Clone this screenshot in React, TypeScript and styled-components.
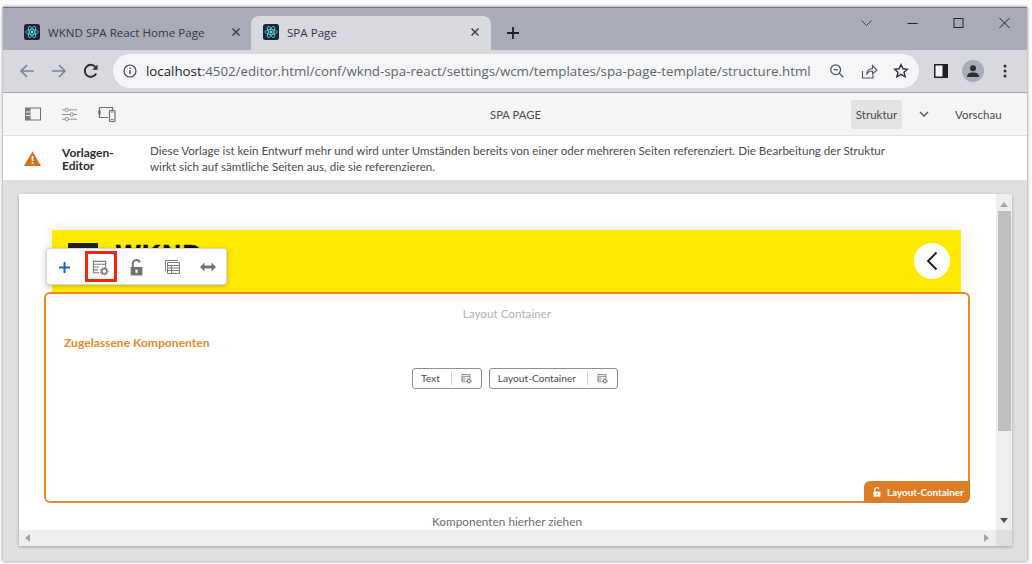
import React from 'react';
import styled, { createGlobalStyle } from 'styled-components';

const GlobalStyle = createGlobalStyle`
  html, body {
    margin: 0;
    padding: 0;
    background: #ffffff;
    overflow: hidden;
  }
  * { box-sizing: border-box; }
`;

const Page = styled.div`
  width: 1032px;
  height: 564px;
  padding: 7px 5px 3px 3px;
  background: #fbfbfb;
`;

const Window = styled.div`
  width: 1024px;
  height: 554px;
  display: flex;
  flex-direction: column;
  border-top: 1px solid #6f7177;
  box-shadow: 0 0 3px rgba(0, 0, 0, 0.55);
  background: #e0e0e0;
  font-family: 'Lato', sans-serif;
`;

const TabStrip = styled.div`
  height: 42px;
  flex: none;
  display: flex;
  align-items: flex-end;
  padding-left: 8px;
  background: #a8abb8;
  position: relative;
  font-family: 'Open Sans', sans-serif;
`;

const Tab = styled.div<{ $active?: boolean }>`
  width: 240px;
  height: 34px;
  display: flex;
  align-items: center;
  padding: 0 ${(p) => (p.$active ? '11px' : '10px')} 2px ${(p) => (p.$active ? '12px' : '13px')};
  border-radius: 8px 8px 0 0;
  background: ${(p) => (p.$active ? '#d7d9df' : 'transparent')};
  font-size: 11.6px;
  color: #333640;
`;

const TabTitle = styled.span`
  flex: 1;
  margin-left: 8px;
  white-space: nowrap;
`;

const NewTab = styled.div`
  margin: 0 0 7px 12px;
  width: 20px;
  height: 20px;
  display: flex;
  align-items: center;
  justify-content: center;
`;

const WindowControls = styled.div`
  position: absolute;
  top: 9px;
  right: 17px;
  display: flex;
  gap: 35px;
  align-items: center;
`;

const AddressRow = styled.div`
  height: 43px;
  flex: none;
  display: flex;
  align-items: center;
  padding: 0 0 0 16px;
  background: #d7d9df;
  border-bottom: 1px solid #a5a6a9;
  font-family: 'Open Sans', sans-serif;
`;

const NavIcons = styled.div`
  display: flex;
  gap: 16px;
  align-items: center;
  width: 94px;
`;

const Omnibox = styled.div`
  width: 806px;
  height: 34px;
  flex: none;
  margin-right: 15px;
  border-radius: 17px;
  background: #f5f6f8;
  display: flex;
  align-items: center;
  padding: 0 10px 0 10px;
  font-size: 13.3px;
  color: #5f6368;
`;

const Url = styled.span`
  flex: 1;
  min-width: 0;
  margin-left: 9px;
  white-space: nowrap;
  b {
    font-weight: 400;
    color: #202124;
  }
`;

const OmniIcons = styled.div`
  display: flex;
  flex: none;
  gap: 15px;
  align-items: center;
`;

const ChromeRight = styled.div`
  display: flex;
  align-items: center;
  gap: 14px;
`;

const Avatar = styled.div`
  width: 22px;
  height: 22px;
  border-radius: 50%;
  background: #a8abb8;
  display: flex;
  align-items: center;
  justify-content: center;
`;

const MenuDots = styled.svg`
  margin-left: 5px;
`;

const EditorBar = styled.div`
  height: 43px;
  flex: none;
  display: flex;
  align-items: center;
  padding: 0 24px 0 22px;
  background: #f5f5f5;
  border-bottom: 1px solid #e1e1e1;
  color: #4b4b4b;
  font-size: 11.5px;
`;

const BarIcons = styled.div`
  display: flex;
  align-items: center;
  gap: 21px;
  width: 465px;
`;

const PageTitle = styled.div`
  width: 361px;
  font-size: 11.3px;
`;

const ModeButton = styled.div`
  width: 51px;
  height: 29px;
  border-radius: 3px;
  background: #e3e3e3;
  display: flex;
  align-items: center;
  justify-content: center;
`;

const ModeCaret = styled.div`
  width: 44px;
  margin-right: 9px;
  display: flex;
  justify-content: center;
`;

const Preview = styled.div``;

const AlertBar = styled.div`
  height: 44px;
  flex: none;
  display: flex;
  align-items: center;
  padding: 1px 0 0 21px;
  background: #ffffff;
  font-size: 11.6px;
  line-height: 16px;
`;

const AlertTitle = styled.div`
  width: 88px;
  margin-left: 21px;
  font-weight: 700;
  color: #2c2c2c;
  font-size: 12px;
  line-height: 13px;
`;

const AlertText = styled.div`
  width: 745px;
  color: #4b4b4b;
`;

const Stage = styled.div`
  flex: 1;
  padding: 14px 15px 15px 16px;
  background: #e0e0e0;
`;

const Frame = styled.div`
  width: 993px;
  height: 352px;
  display: grid;
  grid-template-columns: minmax(0, 1fr) 16px;
  grid-template-rows: minmax(0, 1fr) 16px;
  background: #ffffff;
  box-shadow: 0 1px 3px rgba(0, 0, 0, 0.3);
`;

const Canvas = styled.div`
  position: relative;
  overflow: hidden;
  padding: 36px 0 0 25px;
`;

const Header = styled.div`
  width: 909px;
  height: 62px;
  margin-left: 8px;
  background: #ffea00;
  box-shadow: 0 0 14px rgba(0, 0, 0, 0.1);
  display: flex;
  align-items: center;
  justify-content: space-between;
  padding: 0 11px 0 16px;
  overflow: hidden;
`;

const Logo = styled.div`
  display: flex;
  gap: 18px;
  align-items: flex-start;
  height: 62px;
  padding-top: 13px;
`;

const LogoBars = styled.div`
  width: 30px;
  height: 5px;
  background: #202020;
`;

const LogoText = styled.div`
  font-family: 'Liberation Sans', sans-serif;
  font-size: 26px;
  font-weight: 700;
  line-height: 22px;
  letter-spacing: 1.5px;
  -webkit-text-stroke: 0.6px #111111;
  color: #111111;
`;

const BackButton = styled.div`
  width: 36px;
  height: 36px;
  border-radius: 50%;
  background: #ffffff;
  display: flex;
  align-items: center;
  justify-content: center;
`;

const Container = styled.div`
  width: 926px;
  height: 211px;
  border: 2px solid #e8892a;
  border-radius: 6px;
  position: relative;
  padding: 11px 18px 0;
`;

const Placeholder = styled.div`
  text-align: center;
  font-size: 11.7px;
  line-height: 16px;
  color: #b3b3b3;
`;

const AllowedTitle = styled.div`
  margin-top: 14px;
  font-size: 12.1px;
  line-height: 16px;
  font-weight: 700;
  color: #e8892a;
`;

const ChipRow = styled.div`
  margin-top: 17px;
  display: flex;
  justify-content: center;
  gap: 7px;
  padding-left: 16px;
`;

const Chip = styled.div`
  height: 21px;
  display: flex;
  align-items: center;
  border: 1px solid #8e8e8e;
  border-radius: 3px;
  font-size: 10.2px;
  color: #4b4b4b;
  background: #ffffff;
`;

const ChipLabel = styled.span`
  padding: 0 11px 0 8px;
  height: 13px;
  line-height: 13px;
  border-right: 1px solid #d0d0d0;
`;

const ChipIcon = styled.span`
  width: 29px;
  display: flex;
  justify-content: center;
`;

const Badge = styled.div`
  position: absolute;
  right: -2px;
  bottom: -2px;
  width: 106px;
  height: 22px;
  border-radius: 6px 0 6px 0;
  background: #dc7d26;
  color: #ffffff;
  font-size: 9.85px;
  font-weight: 700;
  display: flex;
  align-items: center;
  padding-left: 8px;
  gap: 5px;
  white-space: nowrap;
`;

const DropHint = styled.div`
  width: 926px;
  margin-top: 11px;
  text-align: center;
  font-size: 11.8px;
  line-height: 16px;
  color: #6e6e6e;
`;

const FloatingToolbar = styled.div`
  position: absolute;
  left: 27px;
  top: 54px;
  width: 181px;
  height: 37px;
  padding-top: 2px;
  background: #ffffff;
  border: 1px solid #d8d8d8;
  border-radius: 3px;
  box-shadow: 0 1px 4px rgba(0, 0, 0, 0.25);
  display: flex;
  align-items: flex-start;
`;

const ToolButton = styled.div<{ $selected?: boolean }>`
  width: 36px;
  height: 32px;
  display: flex;
  align-items: center;
  justify-content: center;
  position: relative;
  &::after {
    content: '';
    display: ${(p) => (p.$selected ? 'block' : 'none')};
    position: absolute;
    box-sizing: border-box;
    left: 2px;
    top: 0;
    width: 32px;
    height: 31px;
    border: 3px solid #f5250d;
  }
`;

const VTrack = styled.div`
  background: #efefef;
  display: flex;
  flex-direction: column;
  align-items: center;
  padding-top: 8px;
  position: relative;
`;

const VThumb = styled.div`
  width: 13px;
  height: 220px;
  margin-top: 4px;
  background: #bfbfbf;
`;

const VDown = styled.div`
  position: absolute;
  bottom: 7px;
  left: 4px;
  width: 0;
  height: 0;
  border-left: 4px solid transparent;
  border-right: 4px solid transparent;
  border-top: 5px solid #505050;
`;

const Up = styled.div`
  width: 0;
  height: 0;
  border-left: 4px solid transparent;
  border-right: 4px solid transparent;
  border-bottom: 5px solid #a3a3a3;
`;

const HTrack = styled.div`
  background: #efefef;
  display: flex;
  align-items: center;
  justify-content: space-between;
  padding: 0 7px 0 6px;
`;

const Left = styled.div`
  width: 0;
  height: 0;
  border-top: 4px solid transparent;
  border-bottom: 4px solid transparent;
  border-right: 5px solid #a3a3a3;
`;

const Right = styled.div`
  width: 0;
  height: 0;
  border-top: 4px solid transparent;
  border-bottom: 4px solid transparent;
  border-left: 5px solid #a3a3a3;
`;

const Corner = styled.div`
  background: #dfdfdf;
`;

const ReactFavicon = () => (
  <svg width="16" height="16" viewBox="0 0 16 16">
    <rect width="16" height="16" rx="2.5" fill="#20232a" />
    <g fill="none" stroke="#61dafb" strokeWidth="0.8">
      <ellipse cx="8" cy="8" rx="6.2" ry="2.4" />
      <ellipse cx="8" cy="8" rx="6.2" ry="2.4" transform="rotate(60 8 8)" />
      <ellipse cx="8" cy="8" rx="6.2" ry="2.4" transform="rotate(120 8 8)" />
    </g>
    <circle cx="8" cy="8" r="1.3" fill="#61dafb" />
  </svg>
);

const CloseX = () => (
  <svg width="10" height="10" viewBox="0 0 10 10">
    <path d="M1.5 1.5l7 7M8.5 1.5l-7 7" stroke="#33363d" strokeWidth="1.4" />
  </svg>
);

// Template policy icon, used both in the toolbar and the component chips
const PolicyIcon = ({ size = 18, color = '#7a7a7a' }: { size?: number; color?: string }) => (
  <svg width={size} height={size} viewBox="0 0 18 18" fill="none">
    <path d="M1.5 14.5v-12h13v6.5M1.5 5.5h13M1.5 8.5h6M1.5 11.5h5M1.5 14.5h6" stroke={color} strokeWidth="1.2" />
    <circle cx="13" cy="13" r="2.6" stroke={color} strokeWidth="1.6" />
    <circle cx="13" cy="13" r="4" stroke={color} strokeWidth="1.2" strokeDasharray="1.4 1.2" />
  </svg>
);

const LockOpen = ({ size = 16, color = '#707070' }: { size?: number; color?: string }) => (
  <svg width={size} height={size} viewBox="0 0 16 16" fill="none">
    <path d="M4.5 8V4.5a3.4 3.4 0 0 1 6.6-1.2" stroke={color} strokeWidth="1.8" />
    <path d="M2.5 7.5h11v8h-11z" fill={color} />
    <rect x="7" y="10" width="2" height="3" fill={color === '#ffffff' ? '#dc7d26' : '#ffffff'} />
  </svg>
);

export default function App() {
  return (
    <Page>
      <GlobalStyle />
      <Window>
        <TabStrip>
          <Tab>
            <ReactFavicon />
            <TabTitle>WKND SPA React Home Page</TabTitle>
            <CloseX />
          </Tab>
          <Tab $active>
            <ReactFavicon />
            <TabTitle>SPA Page</TabTitle>
            <CloseX />
          </Tab>
          <NewTab>
            <svg width="12" height="12" viewBox="0 0 12 12">
              <path d="M6 0v12M0 6h12" stroke="#202124" strokeWidth="1.8" />
            </svg>
          </NewTab>
          <WindowControls>
            <svg width="11" height="12" viewBox="0 0 11 12" fill="none">
              <path d="M0.5 3.500l5 5 5-5" stroke="#333" strokeWidth="0.9" />
            </svg>
            <svg width="11" height="12" viewBox="0 0 11 12" fill="none">
              <path d="M0.5 6.5h10" stroke="#222" strokeWidth="1" />
            </svg>
            <svg width="11" height="12" viewBox="0 0 11 12" fill="none">
              <rect x="1" y="1.5" width="9" height="9" stroke="#222" strokeWidth="1" />
            </svg>
            <svg width="11" height="12" viewBox="0 0 11 12" fill="none">
              <path d="M0.5 1l10 10M10.500 1l-10 10" stroke="#222" strokeWidth="1" />
            </svg>
          </WindowControls>
        </TabStrip>
        <AddressRow>
          <NavIcons>
            <svg width="16" height="16" viewBox="0 0 16 16" fill="none">
              <path d="M15 8H2M8 2L2 8l6 6" stroke="#80848c" strokeWidth="1.7" />
            </svg>
            <svg width="16" height="16" viewBox="0 0 16 16" fill="none">
              <path d="M1 8h13M8 2l6 6-6 6" stroke="#80848c" strokeWidth="1.7" />
            </svg>
            <svg width="16" height="16" viewBox="0 0 16 16" fill="none">
              <path d="M13.2 10.5A6 6 0 1 1 12.4 3.9" stroke="#2b2d33" strokeWidth="1.9" />
              <path d="M14.5 1.5v5.2H9.3z" fill="#2b2d33" />
            </svg>
          </NavIcons>
          <Omnibox>
            <svg width="14" height="14" viewBox="0 0 14 14" fill="none">
              <circle cx="7" cy="7" r="6" stroke="#45484f" strokeWidth="1.2" />
              <path d="M7 6v4.2M7 3.6v1.4" stroke="#45484f" strokeWidth="1.3" />
            </svg>
            <Url>
              <b>localhost</b>:4502/editor.html/conf/wknd-spa-react/settings/wcm/templates/spa-page-template/structure.html
            </Url>
            <OmniIcons>
              <svg width="16" height="16" viewBox="0 0 18 18" fill="none">
                <circle cx="7.5" cy="7.5" r="5.500" stroke="#50535a" strokeWidth="1.4" />
                <path d="M11.3 11.3L16 16M5.2 7.5h4.6" stroke="#50535a" strokeWidth="1.4" />
              </svg>
              <svg width="18" height="18" viewBox="0 0 18 18" fill="none">
                <path d="M2.5 9v7h10.5v-3" stroke="#50535a" strokeWidth="1.1" />
                <path d="M6.5 12.5c.5-4 3-5.8 6-6V3.500l4.500 4.500-4.500 4v-3c-2.500 0-4.500 1-6 3.500z" stroke="#50535a" strokeWidth="1.1" />
              </svg>
              <svg width="16" height="16" viewBox="0 0 16 16" fill="none">
                <path d="M8 1.5l1.9 4.3 4.6.4-3.5 3 1.1 4.6L8 11.4l-4.1 2.4L5 9.200l-3.500-3 4.600-.4z" stroke="#2f3137" strokeWidth="1.4" />
              </svg>
            </OmniIcons>
          </Omnibox>
          <ChromeRight>
            <svg width="14" height="14" viewBox="0 0 14 14">
              <rect width="14" height="14" fill="#1f2023" />
              <rect x="1.500" y="1.500" width="7" height="11" fill="#f4f5f7" />
            </svg>
            <Avatar>
              <svg width="14" height="14" viewBox="0 0 14 14" fill="#2c2e33">
                <circle cx="7" cy="4.200" r="3" />
                <path d="M1 13c0-3 2.500-4.400 6-4.400s6 1.400 6 4.400z" />
              </svg>
            </Avatar>
            <MenuDots width="4" height="14" viewBox="0 0 4 14" fill="#2c2e33">
              <circle cx="2" cy="2" r="1.500" />
              <circle cx="2" cy="7" r="1.500" />
              <circle cx="2" cy="12" r="1.500" />
            </MenuDots>
          </ChromeRight>
        </AddressRow>
        <EditorBar>
          <BarIcons>
            <svg width="16" height="14" viewBox="0 0 16 14" fill="none">
              <rect x="0.500" y="1" width="15" height="12" stroke="#6e6e6e" />
              <rect x="0.500" y="1" width="5" height="12" fill="#7d7d7d" />
              <path d="M1 5h4M1 8.500h4" stroke="#f5f5f5" />
            </svg>
            <svg width="15" height="15" viewBox="0 0 16 15" fill="none" stroke="#8a8a8a">
              <path d="M0 2.500h3.500M7 2.500h9M0 7.500h9M12.500 7.500h3.500M0 12.500h3.500M7 12.500h9" />
              <circle cx="5" cy="2.500" r="1.800" />
              <circle cx="10.500" cy="7.500" r="1.800" />
              <circle cx="5" cy="12.500" r="1.800" />
            </svg>
            <svg width="18" height="16" viewBox="0 0 18 16" fill="none" stroke="#6e6e6e">
              <path d="M10 11.500H1.500v-10h13V4" strokeWidth="1.200" />
              <path d="M1.500 4.500v4" strokeWidth="2.400" />
              <rect x="11.500" y="4.500" width="5.500" height="11" rx="0.700" strokeWidth="1.200" />
              <path d="M13 13.700h2.500M13 6h2.500" strokeWidth="1.200" />
            </svg>
          </BarIcons>
          <PageTitle>SPA PAGE</PageTitle>
          <ModeButton>Struktur</ModeButton>
          <ModeCaret>
            <svg width="10" height="7" viewBox="0 0 10 7" fill="none">
              <path d="M1 1l4 4 4-4" stroke="#5c5c5c" strokeWidth="1.500" />
            </svg>
          </ModeCaret>
          <Preview>Vorschau</Preview>
        </EditorBar>
        <AlertBar>
          <svg width="17" height="15" viewBox="0 0 17 15">
            <path d="M8.500 0.300L17 15H0z" fill="#d5701a" />
            <rect x="7.700" y="5" width="1.700" height="5" fill="#ffffff" />
            <rect x="7.700" y="11" width="1.700" height="1.800" fill="#ffffff" />
          </svg>
          <AlertTitle>
            Vorlagen-
            <br />
            Editor
          </AlertTitle>
          <AlertText>
            Diese Vorlage ist kein Entwurf mehr und wird unter Umständen bereits von einer oder mehreren Seiten referenziert. Die Bearbeitung der Struktur wirkt sich auf sämtliche Seiten aus, die sie referenzieren.
          </AlertText>
        </AlertBar>
        <Stage>
          <Frame>
            <Canvas>
              <Header>
                <Logo>
                  <LogoBars />
                  <LogoText>WKND</LogoText>
                </Logo>
                <BackButton>
                  <svg width="12" height="20" viewBox="0 0 12 20" fill="none">
                    <path d="M10.500 1.500L2 10l8.500 8.500" stroke="#1c1c1c" strokeWidth="1.900" />
                  </svg>
                </BackButton>
              </Header>
              <Container>
                <Placeholder>Layout Container</Placeholder>
                <AllowedTitle>Zugelassene Komponenten</AllowedTitle>
                <ChipRow>
                  <Chip>
                    <ChipLabel>Text</ChipLabel>
                    <ChipIcon>
                      <PolicyIcon size={11} color="#6e6e6e" />
                    </ChipIcon>
                  </Chip>
                  <Chip>
                    <ChipLabel>Layout-Container</ChipLabel>
                    <ChipIcon>
                      <PolicyIcon size={11} color="#6e6e6e" />
                    </ChipIcon>
                  </Chip>
                </ChipRow>
                <Badge>
                  <LockOpen size={10} color="#ffffff" />
                  Layout-Container
                </Badge>
              </Container>
              <DropHint>Komponenten hierher ziehen</DropHint>
              <FloatingToolbar>
                <ToolButton>
                  <svg width="13" height="13" viewBox="0 0 13 13">
                    <path d="M6.500 1v11M1 6.500h11" stroke="#1265c9" strokeWidth="2" />
                  </svg>
                </ToolButton>
                <ToolButton $selected>
                  <PolicyIcon size={17} />
                </ToolButton>
                <ToolButton>
                  <LockOpen size={17} />
                </ToolButton>
                <ToolButton>
                  <svg width="15" height="16" viewBox="0 0 15 16" fill="none" stroke="#7a7a7a">
                    <path d="M2.500 14.500V3.500h12v11zM2.500 6.500h12M2.500 9h12M2.500 11.500h12M6.500 6.500v8" />
                    <path d="M0.500 12V1.500H13" />
                  </svg>
                </ToolButton>
                <ToolButton>
                  <svg width="16" height="10" viewBox="0 0 16 10" fill="#707070">
                    <path d="M0 5l4.500-4.500v3h7v-3L16 5l-4.500 4.500v-3h-7v3z" />
                  </svg>
                </ToolButton>
              </FloatingToolbar>
            </Canvas>
            <VTrack>
              <Up />
              <VThumb />
              <VDown />
            </VTrack>
            <HTrack>
              <Left />
              <Right />
            </HTrack>
            <Corner />
          </Frame>
        </Stage>
      </Window>
    </Page>
  );
}
